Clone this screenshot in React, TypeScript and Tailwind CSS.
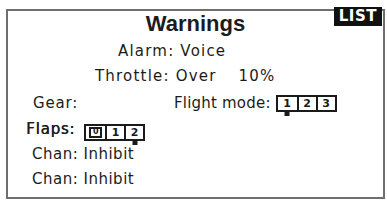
import React from 'react';

const font = { fontFamily: '"DejaVu Sans", "Liberation Sans", sans-serif' };

interface SwitchProps {
  cells: string[];
  active: number;
  boxed?: number[];
}

const Switch: React.FC<SwitchProps> = ({ cells, active, boxed = [] }) => (
  <div className="relative inline-flex border-2 border-[#1a1a1a] h-[17px]">
    {cells.map((c, i) => (
      <div
        key={i}
        className={`relative w-[19px] flex items-center justify-center text-[11px] font-bold leading-none text-[#1a1a1a] tracking-normal ${
          i > 0 ? 'border-l-2 border-[#1a1a1a]' : ''
        }`}
      >
        {boxed.includes(i) ? (
          <span className="border-2 border-[#1a1a1a] px-[2px] h-[11px] flex items-center text-[8px]">{c}</span>
        ) : (
          <span>{c}</span>
        )}
        {i === active && (
          <span className="absolute -bottom-[6px] left-1/2 -translate-x-1/2 w-[5px] h-[4px] bg-[#1a1a1a]" />
        )}
      </div>
    ))}
  </div>
);

export default function App() {
  return (
    <div className="w-[387px] h-[201px] bg-white overflow-hidden pt-[9px] pl-[6px]" style={font}>
      <div className="relative w-[379px] h-[190px] border-2 border-[#6e6e6e] flex flex-col text-[#1c1c1c] text-[15px] tracking-[0.8px]">
        <div className="absolute -top-[4px] right-[1px] h-[19px] px-[5px] bg-[#111] text-white text-[15px] font-bold leading-[19px] tracking-[0.5px]">
          LIST
        </div>
        <div className="h-[26px] flex justify-center items-start">
          <span className="text-[22px] font-bold leading-[25px] tracking-normal" style={{ fontFamily: '"Liberation Sans", Arial, sans-serif' }}>
            Warnings
          </span>
        </div>
        <div className="h-[25px] flex items-center pl-[110px] pt-[4px] tracking-[1.2px]">Alarm: Voice</div>
        <div className="h-[25px] flex items-center pl-[87px] pt-[4px] tracking-[1.2px]">
          <span>Throttle: Over</span>
          <span className="ml-[22px]">10%</span>
        </div>
        <div className="h-[27px] flex items-center pt-[6px]">
          <span className="pl-[25px] w-[166px]">Gear:</span>
          <span className="tracking-[0.2px]">Flight mode:</span>
          <span className="ml-[5px] -mt-[3px]">
            <Switch cells={['1', '2', '3']} active={0} />
          </span>
        </div>
        <div className="h-[26px] flex items-center pt-[4px]">
          <span className="pl-[18px] [text-shadow:0.5px_0_0_#1c1c1c]">Flaps:</span>
          <span className="ml-[9px] mt-[1px]">
            <Switch cells={['0', '1', '2']} active={2} boxed={[0]} />
          </span>
        </div>
        <div className="h-[25px] flex items-center pl-[24px] pt-[4px] tracking-[0.5px]">Chan: Inhibit</div>
        <div className="h-[25px] flex items-center pl-[24px] pt-[3px] tracking-[0.5px]">Chan: Inhibit</div>
      </div>
    </div>
  );
}
